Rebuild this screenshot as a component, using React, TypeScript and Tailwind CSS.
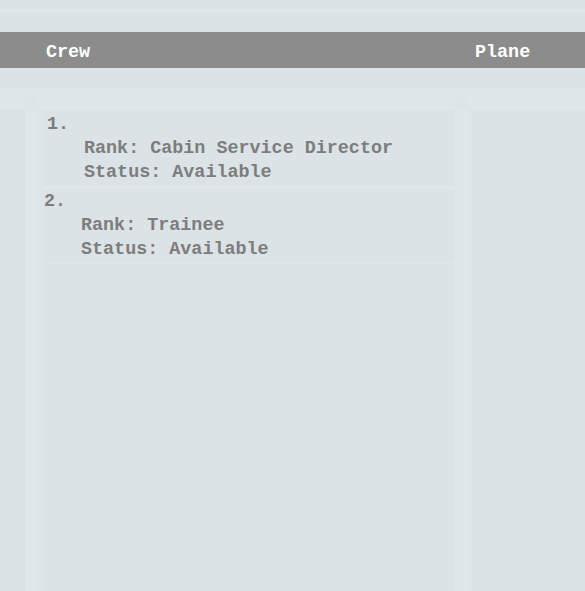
const crew = [
  { rank: 'Cabin Service Director', status: 'Available' },
  { rank: 'Trainee', status: 'Available' },
]

function Gutter() {
  return (
    <div className="relative bg-[#e0e7ea]">
      <div className="absolute left-1/2 -translate-x-1/2 top-[-14px] w-[16px] h-[14px] bg-[#dde5e8] rounded-t-full" />
    </div>
  )
}

export default function App() {
  return (
    <div
      className="min-h-[591px] w-[585px] bg-[#dbe3e6] text-[#7d7d7d] font-bold overflow-hidden"
      style={{ fontFamily: '"Liberation Mono", "Courier New", monospace' }}
    >
      {/* top strip */}
      <div className="h-[32px] pt-[9px]">
        <div className="h-[3px] bg-[#e0e7ea]" />
      </div>

      {/* header */}
      <div className="h-[36px] bg-[#8c8c8c] flex items-center pt-[5px] text-white text-[18.4px]">
        <span className="pl-[46px] w-[475px]">Crew</span>
        <span>Plane</span>
      </div>

      <div className="h-[20px]" />
      <div className="h-[22px] bg-[#e0e7ea]" />

      {/* columns */}
      <div className="grid grid-cols-[25px_12px_6px_412px_13px_4px_113px] min-h-[481px]">
        <div className="bg-[#dae2e5]" />
        <Gutter />
        <div className="bg-[#dde5e8]" />
        <div className="bg-[#dbe3e6] text-[18.4px] leading-[24px]">
          {crew.map((m, i) => (
            <div
              key={i}
              className={
                i === 0
                  ? 'pl-[4px] pt-[3px] pb-[1px] border-b-[3px] border-[#e0e7ea]'
                  : 'pl-[1px] pt-[1px] pb-[1px] border-b border-[#e0e7ea]'
              }
            >
              <div>{i + 1}.</div>
              <div className="pl-[37px]">Rank: {m.rank}</div>
              <div className="pl-[37px]">Status: {m.status}</div>
            </div>
          ))}
        </div>
        <Gutter />
        <div className="bg-[#dde5e8]" />
        <div className="bg-[#dbe3e6]" />
      </div>
    </div>
  )
}
